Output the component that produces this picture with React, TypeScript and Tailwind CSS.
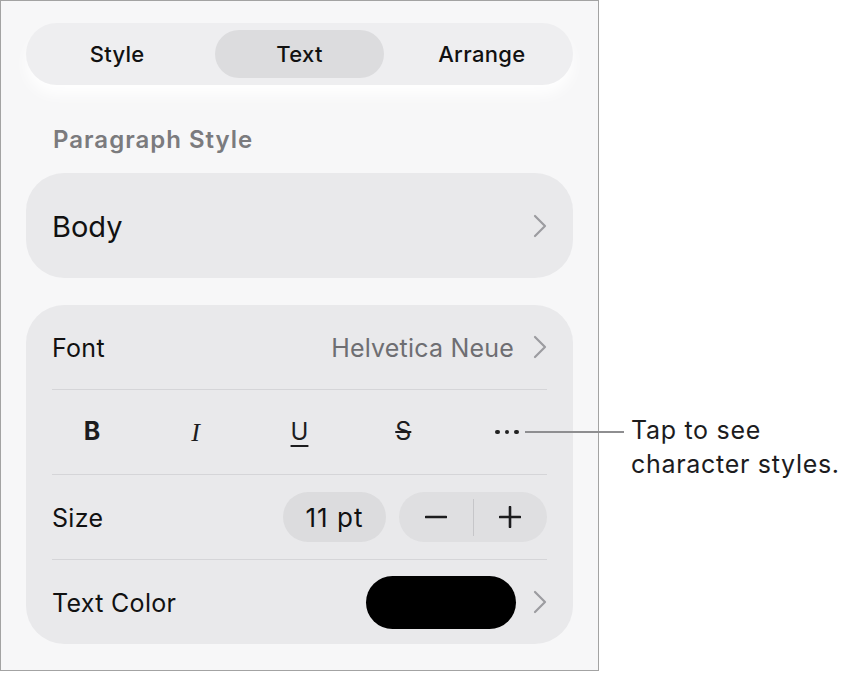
import React from "react";

const Chevron = () => (
  <svg width="14" height="24" viewBox="0 0 14 24" fill="none" className="shrink-0">
    <path
      d="M2 2 L12 12 L2 22"
      stroke="#9c9ca0"
      strokeWidth="2.2"
      strokeLinecap="round"
      strokeLinejoin="round"
    />
  </svg>
);

const Divider = () => <div className="mx-[26px] h-px bg-[#d5d5d8]" />;

export default function App() {
  const tabs = ["Style", "Text", "Arrange"];

  return (
    <div className="min-h-screen bg-white font-['Inter',sans-serif] text-[#111]">
      <div className="relative">
        <div className="w-[599px] h-[671px] border border-[#a3a3a3] bg-[#f7f7f8] px-[25px] pt-[22px]">
          {/* Segmented control */}
          <div className="grid grid-cols-3 h-[62px] rounded-full bg-[#eeeef0] shadow-[0_10px_14px_rgba(255,255,255,0.9)]">
            {tabs.map((tab) => (
              <div key={tab} className="p-[7px]">
                <div
                  className={`h-full flex items-center justify-center rounded-full text-[22px] font-medium tracking-[0.3px] ${
                    tab === "Text" ? "bg-[#dcdcde]" : ""
                  }`}
                >
                  {tab}
                </div>
              </div>
            ))}
          </div>

          <div className="mt-[40px] pl-[27px] text-[24px] leading-[30px] font-semibold tracking-[1px] text-[#7b7b7e]">
            Paragraph Style
          </div>

          {/* Paragraph style */}
          <div className="mt-[18px] h-[105px] rounded-[38px] bg-[#e9e9eb] flex items-center justify-between pl-[26px] pr-[26px]">
            <span className="text-[29px] pt-[3px]">Body</span>
            <Chevron />
          </div>

          {/* Font options */}
          <div className="mt-[27px] rounded-[38px] bg-[#e9e9eb]">
            <div className="h-[84px] flex items-center justify-between px-[26px]">
              <span className="text-[25px] tracking-[0.3px] pt-[3px]">Font</span>
              <div className="flex items-center gap-[19px]">
                <span className="text-[25px] tracking-[0.2px] text-[#6e6e72] pt-[3px]">Helvetica Neue</span>
                <Chevron />
              </div>
            </div>
            <Divider />
            <div className="h-[84px] grid grid-cols-5 items-center px-[14px] text-[#1c1c1e]">
              <div className="flex justify-center">
                <span className="text-[25px] font-bold">B</span>
              </div>
              <div className="flex justify-center">
                <span className="text-[26px] italic font-['Liberation_Serif',serif]">I</span>
              </div>
              <div className="flex justify-center">
                <span className="text-[24px] underline decoration-[2px] underline-offset-[5px]">U</span>
              </div>
              <div className="flex justify-center">
                <span className="text-[25px] line-through decoration-[1.5px]">S</span>
              </div>
              <div className="flex justify-center items-center gap-[5px]">
                <span className="w-[4.5px] h-[4.5px] rounded-full bg-[#222]" />
                <span className="w-[4.5px] h-[4.5px] rounded-full bg-[#222]" />
                <span className="w-[4.5px] h-[4.5px] rounded-full bg-[#222]" />
              </div>
            </div>
            <Divider />
            <div className="h-[84px] flex items-center justify-between px-[26px]">
              <span className="text-[25px] tracking-[0.3px] pt-[3px]">Size</span>
              <div className="flex items-center gap-[13px]">
                <div className="w-[103px] h-[50px] rounded-full bg-[#dcdcde] flex items-center justify-center text-[26px] tracking-[1px]">
                  11 pt
                </div>
                <div className="w-[148px] h-[50px] rounded-full bg-[#dfdfe1] flex items-center">
                  <div className="flex-1 flex justify-center">
                    <svg width="22" height="22" viewBox="0 0 22 22">
                      <path d="M1 11 H21" stroke="#1c1c1e" strokeWidth="2.6" strokeLinecap="round" />
                    </svg>
                  </div>
                  <div className="w-px h-[37px] bg-[#c6c6c9]" />
                  <div className="flex-1 flex justify-center">
                    <svg width="22" height="22" viewBox="0 0 22 22">
                      <path d="M1 11 H21 M11 1 V21" stroke="#1c1c1e" strokeWidth="2.6" strokeLinecap="round" />
                    </svg>
                  </div>
                </div>
              </div>
            </div>
            <Divider />
            <div className="h-[84px] flex items-center justify-between px-[26px]">
              <span className="text-[25px] tracking-[0.3px] pt-[3px]">Text Color</span>
              <div className="flex items-center gap-[17px]">
                <div className="w-[150px] h-[53px] rounded-full bg-black" />
                <Chevron />
              </div>
            </div>
          </div>
        </div>

        {/* Callout */}
        <div className="absolute left-[525px] top-[431px] w-[99px] h-[2px] bg-[#8e8e90]" />
        <div className="absolute left-[631px] top-[413px] text-[25px] leading-[34px] tracking-[0.7px] text-[#1c1c1e]">
          Tap to see
          <br />
          character styles.
        </div>
      </div>
    </div>
  );
}
